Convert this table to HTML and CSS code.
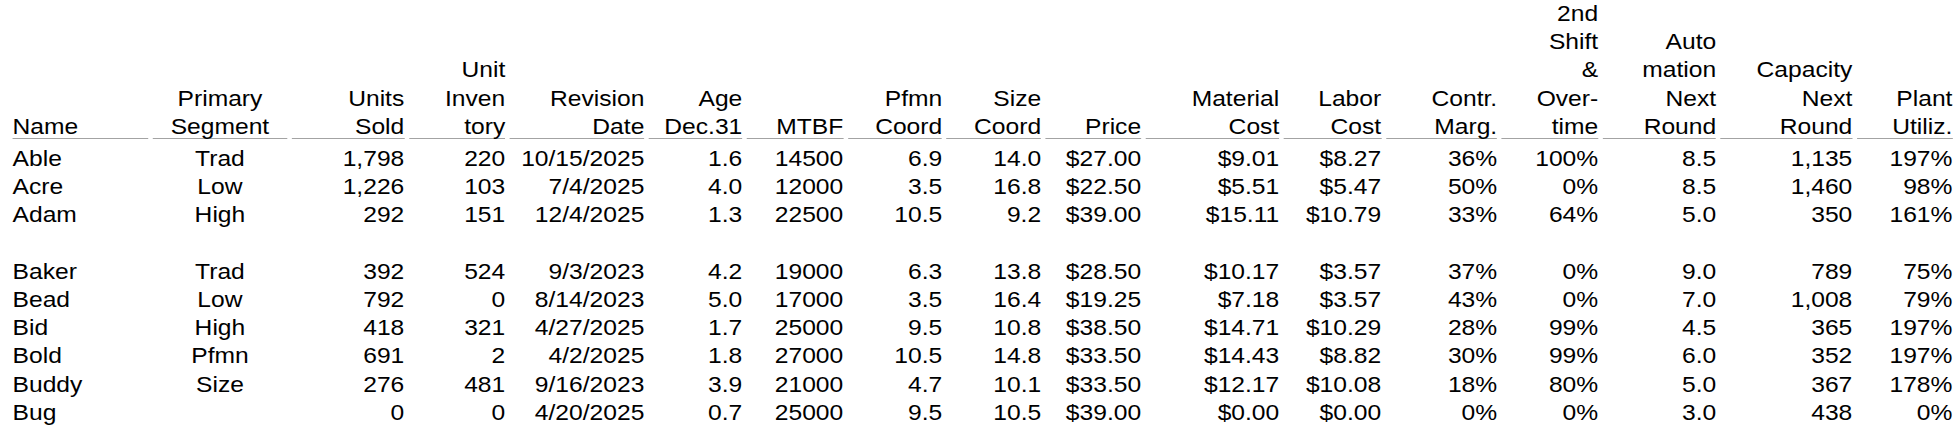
FILE: index.html
```html
<!DOCTYPE html>
<html>
<head>
<meta charset="utf-8">
<title>Production Analysis</title>
<link rel="stylesheet" href="styles.css">
</head>
<body>
<table class="sheet">
  <colgroup>
    <col class="w-name"><col class="w-seg"><col class="w-units"><col class="w-inv"><col class="w-rev">
    <col class="w-age"><col class="w-mtbf"><col class="w-pfmn"><col class="w-size"><col class="w-price">
    <col class="w-mat"><col class="w-lab"><col class="w-contr"><col class="w-shift"><col class="w-auto">
    <col class="w-cap"><col class="w-plant">
  </colgroup>
  <thead>
    <tr>
      <th class="left"><div class="hd">Name</div></th>
      <th class="mid"><div class="hd">Primary<br>Segment</div></th>
      <th><div class="hd">Units<br>Sold</div></th>
      <th><div class="hd">Unit<br>Inven<br>tory</div></th>
      <th><div class="hd">Revision<br>Date</div></th>
      <th><div class="hd">Age<br>Dec.31</div></th>
      <th><div class="hd">MTBF</div></th>
      <th><div class="hd">Pfmn<br>Coord</div></th>
      <th><div class="hd">Size<br>Coord</div></th>
      <th><div class="hd">Price</div></th>
      <th><div class="hd">Material<br>Cost</div></th>
      <th><div class="hd">Labor<br>Cost</div></th>
      <th><div class="hd">Contr.<br>Marg.</div></th>
      <th><div class="hd">2nd<br>Shift<br>&amp;<br>Over-<br>time</div></th>
      <th><div class="hd">Auto<br>mation<br>Next<br>Round</div></th>
      <th><div class="hd">Capacity<br>Next<br>Round</div></th>
      <th><div class="hd">Plant<br>Utiliz.</div></th>
    </tr>
  </thead>
  <tbody>
    <tr class="first">
      <td class="left">Able</td><td class="mid">Trad</td><td>1,798</td><td>220</td><td>10/15/2025</td><td>1.6</td><td>14500</td><td>6.9</td><td>14.0</td><td>$27.00</td><td>$9.01</td><td>$8.27</td><td>36%</td><td>100%</td><td>8.5</td><td>1,135</td><td>197%</td>
    </tr>
    <tr>
      <td class="left">Acre</td><td class="mid">Low</td><td>1,226</td><td>103</td><td>7/4/2025</td><td>4.0</td><td>12000</td><td>3.5</td><td>16.8</td><td>$22.50</td><td>$5.51</td><td>$5.47</td><td>50%</td><td>0%</td><td>8.5</td><td>1,460</td><td>98%</td>
    </tr>
    <tr>
      <td class="left">Adam</td><td class="mid">High</td><td>292</td><td>151</td><td>12/4/2025</td><td>1.3</td><td>22500</td><td>10.5</td><td>9.2</td><td>$39.00</td><td>$15.11</td><td>$10.79</td><td>33%</td><td>64%</td><td>5.0</td><td>350</td><td>161%</td>
    </tr>
    <tr class="blank">
      <td colspan="17">&nbsp;</td>
    </tr>
    <tr>
      <td class="left">Baker</td><td class="mid">Trad</td><td>392</td><td>524</td><td>9/3/2023</td><td>4.2</td><td>19000</td><td>6.3</td><td>13.8</td><td>$28.50</td><td>$10.17</td><td>$3.57</td><td>37%</td><td>0%</td><td>9.0</td><td>789</td><td>75%</td>
    </tr>
    <tr>
      <td class="left">Bead</td><td class="mid">Low</td><td>792</td><td>0</td><td>8/14/2023</td><td>5.0</td><td>17000</td><td>3.5</td><td>16.4</td><td>$19.25</td><td>$7.18</td><td>$3.57</td><td>43%</td><td>0%</td><td>7.0</td><td>1,008</td><td>79%</td>
    </tr>
    <tr>
      <td class="left">Bid</td><td class="mid">High</td><td>418</td><td>321</td><td>4/27/2025</td><td>1.7</td><td>25000</td><td>9.5</td><td>10.8</td><td>$38.50</td><td>$14.71</td><td>$10.29</td><td>28%</td><td>99%</td><td>4.5</td><td>365</td><td>197%</td>
    </tr>
    <tr>
      <td class="left">Bold</td><td class="mid">Pfmn</td><td>691</td><td>2</td><td>4/2/2025</td><td>1.8</td><td>27000</td><td>10.5</td><td>14.8</td><td>$33.50</td><td>$14.43</td><td>$8.82</td><td>30%</td><td>99%</td><td>6.0</td><td>352</td><td>197%</td>
    </tr>
    <tr>
      <td class="left">Buddy</td><td class="mid">Size</td><td>276</td><td>481</td><td>9/16/2023</td><td>3.9</td><td>21000</td><td>4.7</td><td>10.1</td><td>$33.50</td><td>$12.17</td><td>$10.08</td><td>18%</td><td>80%</td><td>5.0</td><td>367</td><td>178%</td>
    </tr>
    <tr>
      <td class="left">Bug</td><td class="mid"></td><td>0</td><td>0</td><td>4/20/2025</td><td>0.7</td><td>25000</td><td>9.5</td><td>10.5</td><td>$39.00</td><td>$0.00</td><td>$0.00</td><td>0%</td><td>0%</td><td>3.0</td><td>438</td><td>0%</td>
    </tr>
  </tbody>
</table>
</body>
</html>
```

FILE: styles.css
```css
html, body {
  background: #ffffff;
}

body {
  margin: 0 0 0 8px;
  color: #000000;
  font-family: "Liberation Sans", Arial, Helvetica, sans-serif;
  font-size: 21.6px;
  line-height: 28.2px;
  overflow: hidden;
}

.sheet {
  table-layout: fixed;
  width: 1709.65px;
  border-collapse: separate;
  border-spacing: 4.386px 0;
  margin: 0;
  transform: scaleX(1.14);
  transform-origin: 0 0;
}

.sheet th,
.sheet td {
  padding: 0;
  text-align: right;
  white-space: nowrap;
  font-weight: normal;
}

.sheet th {
  vertical-align: bottom;
  border-bottom: 1px solid #a3a3a3;
}

.sheet .hd {
  margin-bottom: -3px;
}

.sheet .left { text-align: left; }
.sheet .mid { text-align: center; }

.sheet tr.first td {
  padding-top: 6px;
}

.sheet tr.blank td {
  height: 28.2px;
}

.w-name { width: 118.42px; }
.w-seg { width: 117.54px; }
.w-units { width: 98.25px; }
.w-inv { width: 84.21px; }
.w-rev { width: 117.54px; }
.w-age { width: 81.58px; }
.w-mtbf { width: 84.21px; }
.w-pfmn { width: 82.46px; }
.w-size { width: 82.46px; }
.w-price { width: 83.33px; }
.w-mat { width: 116.67px; }
.w-lab { width: 85.09px; }
.w-contr { width: 97.37px; }
.w-shift { width: 84.21px; }
.w-auto { width: 99.12px; }
.w-cap { width: 114.91px; }
.w-plant { width: 83.33px; }
```
